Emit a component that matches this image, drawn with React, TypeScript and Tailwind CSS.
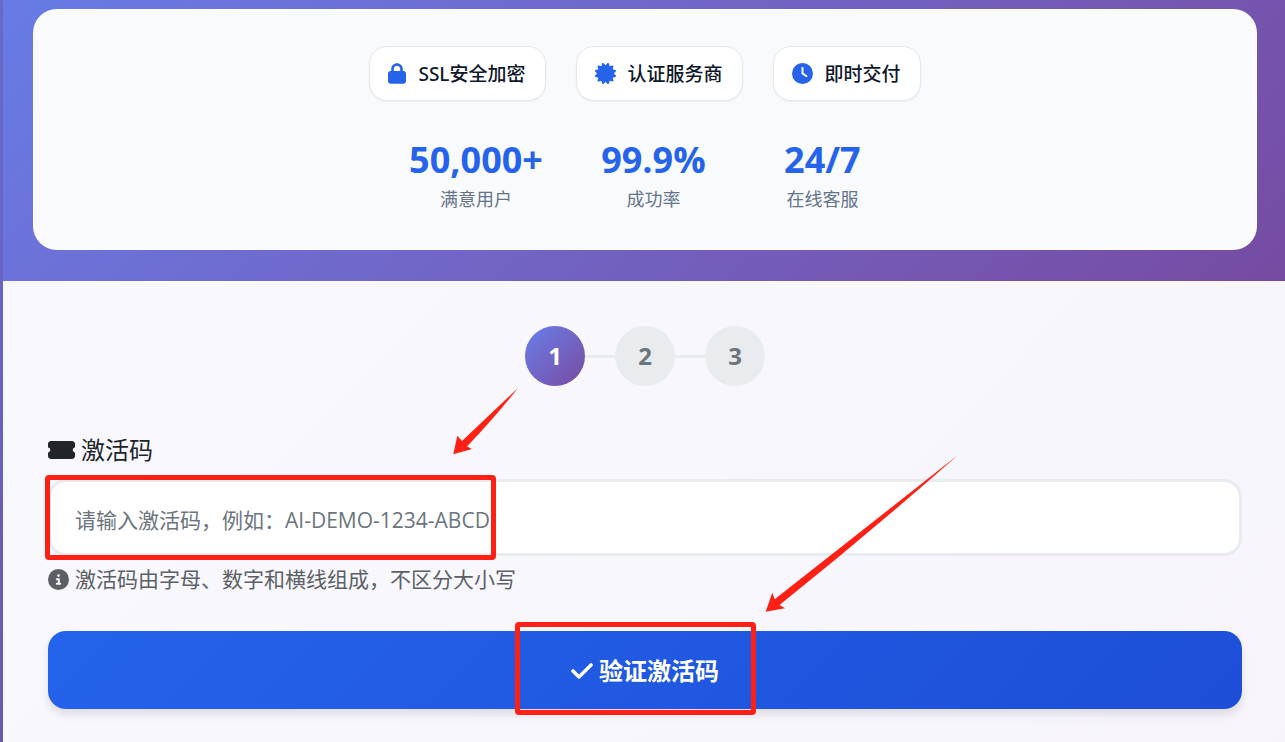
import type { ReactNode } from "react";
import {
	FaCertificate,
	FaCheck,
	FaCircleInfo,
	FaClock,
	FaLock,
	FaTicketSimple,
} from "react-icons/fa6";

const badges = [
	{ icon: <FaLock className="w-[18px]" />, text: "SSL安全加密" },
	{ icon: <FaCertificate />, text: "认证服务商" },
	{ icon: <FaClock />, text: "即时交付" },
];

const stats = [
	{ value: "50,000+", label: "满意用户" },
	{ value: "99.9%", label: "成功率" },
	{ value: "24/7", label: "在线客服" },
];

export default function App() {
	return (
		<div className="min-h-screen pl-[3px] bg-linear-to-b from-[#646cc8] to-[#6858b4] font-['Open_Sans','Noto_Sans_CJK_SC',sans-serif]">
			<main className="min-h-screen bg-linear-135 from-[#f8f9fe] to-[#f7f5fb]">
				<Hero />
				<section className="px-[45px] pt-[45px] pr-[43px] pb-8">
					<Steps current={1} />
					<ActivationForm />
				</section>
			</main>
		</div>
	);
}

function Hero() {
	return (
		<header className="px-[30px] pt-[9px] pr-[28px] pb-[31px] bg-linear-135 from-[#677be6] to-[#764ba2]">
			<div className="rounded-3xl bg-[#f8fafc] border border-white/80 pt-9 pb-[34px]">
				<div className="flex flex-wrap justify-center gap-[30px]">
					{badges.map((badge) => (
						<div
							key={badge.text}
							className="h-[55px] px-[18px] flex items-center gap-3 rounded-[18px] border border-[#e2e8f0] bg-white shadow-xs font-['Noto_Sans','Noto_Sans_CJK_SC',sans-serif] text-[19px] font-medium text-[#0f172a]"
						>
							<span className="text-[21px] text-[#2563eb]">{badge.icon}</span>
							<span className="pt-px pr-px">{badge.text}</span>
						</div>
					))}
				</div>
				<div className="mt-9 flex flex-wrap justify-center gap-[52px] text-center">
					{stats.map((stat) => (
						<div key={stat.label} className="min-w-[117px]">
							<div className="text-4xl leading-[46px] font-bold text-[#2563eb]">
								{stat.value}
							</div>
							<div className="text-lg leading-8 text-[#64748b]">
								{stat.label}
							</div>
						</div>
					))}
				</div>
			</div>
		</header>
	);
}

function Steps({ current }: { current: number }) {
	return (
		<ol className="flex items-center justify-center text-2xl font-bold">
			{[1, 2, 3].map((step) => (
				<li key={step} className="flex items-center">
					{step > 1 && <span className="w-[30px] h-[3px] bg-[#e9ecef]" />}
					<span
						className={
							step === current
								? "size-[60px] flex items-center justify-center rounded-full text-white bg-linear-135 from-[#667eea] to-[#764ba2]"
								: "size-[60px] flex items-center justify-center rounded-full text-[#6c757d] bg-[#e9ecef]"
						}
					>
						{step}
					</span>
				</li>
			))}
		</ol>
	);
}

function ActivationForm() {
	return (
		<form className="mt-[46px]" onSubmit={(e) => e.preventDefault()}>
			<label
				htmlFor="code"
				className="flex items-center gap-[6px] text-2xl leading-9 text-[#212529]"
			>
				<FaTicketSimple className="w-[27px]" />
				激活码
			</label>
			<div className="relative mt-[11px]">
				<input
					id="code"
					type="text"
					placeholder="请输入激活码，例如：AI-DEMO-1234-ABCD"
					className="block w-full h-[77px] px-6 pt-1 rounded-[18px] border-3 border-[#e9ecef] bg-white text-[21px] text-[#212529] placeholder:text-[#6c757d] outline-none"
				/>
				<Mark className="-left-[3px] -top-[4px] w-[451px] h-[85px]" />
				<Arrow className="left-[404px] -top-[92px] w-[67px] h-[70px]" box="0 0 67 70">
					<path d="M66 1L10 54L5.3 48.7L1.3 67.3L20 62L15 59.5Q44 29 66 1Z" />
				</Arrow>
			</div>
			<p className="mt-[7px] flex items-center gap-[6px] text-[21px] leading-8 text-[#5c6066]">
				<FaCircleInfo />
				激活码由字母、数字和横线组成，不区分大小写
			</p>
			<div className="relative mt-9">
				<button className="w-full h-[78px] pt-[2px] flex items-center justify-center gap-[6px] rounded-[18px] bg-linear-135 from-[#2563eb] to-[#1d4ed8] shadow-[0_6px_9px_rgba(0,0,0,0.1)] text-2xl font-bold text-white">
					<FaCheck className="w-[22px] stroke-white stroke-[16px]" />
					验证激活码
				</button>
				<Mark className="left-[467px] -top-[9px] w-[241px] h-[93px]" />
				<Arrow className="left-[716px] -top-[176px] w-[194px] h-[158px]" box="0 0 194 158">
					<path d="M194 0L10.7 144.3L8.3 137.7L1.7 156.7L21 153.3L15.5 150Q108 76 194 0Z" />
				</Arrow>
			</div>
		</form>
	);
}

function Mark({ className }: { className: string }) {
	return (
		<span
			className={`absolute pointer-events-none border-[5px] border-[#fe2014] rounded-sm ${className}`}
		/>
	);
}

function Arrow({
	className,
	box,
	children,
}: {
	className: string;
	box: string;
	children: ReactNode;
}) {
	return (
		<svg
			viewBox={box}
			fill="#fe2014"
			className={`absolute pointer-events-none ${className}`}
		>
			{children}
		</svg>
	);
}
